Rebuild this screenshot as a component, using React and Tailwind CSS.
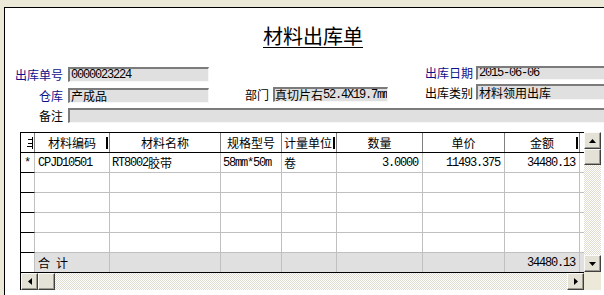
import React from 'react';

// latin runs in the old forms are 6px-wide bitmap digits, keep them narrow
function M({ children }) {
  return <span className="font-['Liberation_Mono',monospace] text-[12px] tracking-[-1.2px]">{children}</span>;
}

function Label({ className = '', children }) {
  return <div className={`text-[12px] leading-[15px] whitespace-nowrap ${className}`}>{children}</div>;
}

function Field({ className = '', children }) {
  return (
    <div className={`flex items-center overflow-hidden whitespace-nowrap bg-[#e0e0e0] border-t-2 border-l-2 border-b border-r border-t-[#7b7b7b] border-l-[#7b7b7b] border-b-[#f7f7f7] border-r-[#f7f7f7] text-[12px] leading-none text-black ${className}`}>
      {children}
    </div>
  );
}

function Arrow({ dir }) {
  if (dir === 'up') return <svg width="7" height="4" viewBox="0 0 7 4"><path d="M3.5 0L7 4H0z" fill="#000" /></svg>;
  if (dir === 'down') return <svg width="7" height="4" viewBox="0 0 7 4"><path d="M0 0h7L3.5 4z" fill="#000" /></svg>;
  if (dir === 'left') return <svg width="4" height="7" viewBox="0 0 4 7"><path d="M4 0v7L0 3.5z" fill="#000" /></svg>;
  return <svg width="4" height="7" viewBox="0 0 4 7"><path d="M0 0l4 3.5L0 7z" fill="#000" /></svg>;
}

function SBtn({ dir, className = '' }) {
  return (
    <div className={`flex shrink-0 items-center justify-center bg-[#e4e1d6] border border-t-[#fbfaf6] border-l-[#fbfaf6] border-b-[#404040] border-r-[#404040] shadow-[inset_-1px_-1px_0_#9d9a90] ${className}`}>
      {dir && <Arrow dir={dir} />}
    </div>
  );
}

const track = "bg-[repeating-conic-gradient(#ffffff_0_25%,#dedbcf_0_50%)] bg-[length:2px_2px]";

const COLS = [
  { w: 'w-[75px]', head: '材料编码', mark: true },
  { w: 'w-[111px]', head: '材料名称' },
  { w: 'w-[61px]', head: '规格型号' },
  { w: 'w-[55px]', head: '计量单位', left: true, mark: true },
  { w: 'w-[86px]', head: '数量' },
  { w: 'w-[82px]', head: '单价' },
  { w: 'w-[75px]', head: '金额', mark: true },
];

const ROW1 = [
  { t: <M>CPJD10501</M>, cls: 'pl-[3px]' },
  { t: <><M>RT8002</M>胶带</>, cls: 'pl-[2px]' },
  { t: <M>58mm*50m</M>, cls: 'pl-[2px]' },
  { t: '卷', cls: 'pl-[2px]' },
  { t: <M>3.0000</M>, cls: 'justify-end pr-[4px]' },
  { t: <M>11493.375</M>, cls: 'justify-end pr-[4px]' },
  { t: <M>34480.13</M>, cls: 'justify-end pr-[4px]' },
];

function Grid() {
  return (
    <div className="flex ml-[15px] mt-[9px]">
      <div className="w-[564px] border-l border-t border-black">
        {/* header */}
        <div className="flex h-[20px] border-b border-black text-[12px]">
          <div className="relative w-[14px] h-full border-r border-r-[#808080]">
            {/* clipped first column caption */}
            <span className="absolute left-[11px] top-[4px] w-[1px] h-[12px] bg-black" />
            <span className="absolute left-[7px] top-[6px] w-[4px] h-[1px] bg-black" />
            <span className="absolute left-[7px] top-[10px] w-[4px] h-[1px] bg-black" />
            <span className="absolute left-[6px] top-[13px] w-[5px] h-[1px] bg-black" />
          </div>
          {COLS.map((c) => (
            <div key={c.head} className={`relative flex items-center h-full border-r border-r-[#808080] overflow-hidden ${c.w} ${c.left ? 'pl-[2px]' : 'justify-center'}`}>
              {c.head}
              {c.mark && <span className="absolute right-[1px] top-[4px] w-[2px] h-[12px] bg-black" />}
            </div>
          ))}
          <div className="w-[4px] h-full" />
        </div>

        {/* body rows */}
        {[0, 1, 2, 3, 4].map((r) => (
          <div key={r} className="flex h-[20px] text-[12px]">
            <div className="w-[14px] h-full border-r border-b border-r-[#c0c0c0] border-b-black flex items-center pl-[3px]">
              {r === 0 && <M>*</M>}
            </div>
            {COLS.map((c, i) => (
              <div key={c.head} className={`flex items-center h-full border-r border-b border-[#c0c0c0] overflow-hidden whitespace-nowrap ${c.w} ${r === 0 ? ROW1[i].cls : ''}`}>
                {r === 0 && ROW1[i].t}
              </div>
            ))}
            <div className="w-[4px] h-full border-b border-[#c0c0c0]" />
          </div>
        ))}

        {/* total */}
        <div className="flex h-[20px] text-[12px] border-b border-black">
          <div className="w-[14px] h-full border-r border-[#c0c0c0]" />
          {COLS.map((c, i) => (
            <div key={c.head} className={`flex items-center h-full bg-[#e0e0e0] border-r border-[#c0c0c0] ${c.w} ${i === 0 ? 'pl-[3px] gap-[6px]' : 'justify-end pr-[4px]'}`}>
              {i === 0 && <><span>合</span><span>计</span></>}
              {i === 6 && <M>34480.13</M>}
            </div>
          ))}
          <div className="w-[4px] h-full bg-[#e0e0e0]" />
        </div>

        {/* horizontal scroll */}
        <div className="flex h-[17px]">
          <SBtn dir="left" className="w-[17px] h-[17px]" />
          <SBtn className="w-[17px] h-[17px]" />
          <div className={`flex-1 ${track}`} />
          <SBtn dir="right" className="w-[17px] h-[17px]" />
        </div>
      </div>

      {/* vertical scroll */}
      <div className="flex flex-col w-[17px]">
        <div className="flex flex-col h-[140px]">
          <SBtn dir="up" className="w-[17px] h-[17px]" />
          <SBtn className="w-[17px] h-[16px]" />
          <div className={`flex-1 ${track}`} />
          <SBtn dir="down" className="w-[17px] h-[17px]" />
        </div>
        <div className="h-[18px] bg-[#ece9d8]" />
      </div>
    </div>
  );
}

export default function App() {
  return (
    <div className="w-[604px] h-[295px] overflow-hidden bg-[#ece9d8] font-['Noto_Sans_CJK_SC',sans-serif] text-black">
      <div className="ml-[4px] mt-[7px] w-[640px] h-[300px] bg-white border-l border-t border-black">
        <div className="ml-[258px] mt-[16px] h-[24px] text-[20px] leading-[24px] underline underline-offset-[3px] decoration-1 whitespace-nowrap">
          材料出库单
        </div>

        {/* row 1 */}
        <div className="flex items-start mt-[17px]">
          <div className="flex items-center mt-[2px]">
            <Label className="w-[58px] text-right text-[#10108a]">出库单号</Label>
            <Field className="ml-[5px] w-[141px] h-[15px] pl-[1px]"><M>0000023224</M></Field>
          </div>
          <div className="flex items-center ml-[216px]">
            <Label className="w-[48px] text-[#10108a]">出库日期</Label>
            <Field className="ml-[3px] w-[140px] h-[14px] pl-[1px]"><M>2015-06-06</M></Field>
          </div>
        </div>

        {/* row 2 */}
        <div className="flex items-start mt-[2px]">
          <div className="flex items-center mt-[4px]">
            <Label className="w-[58px] text-right text-[#10108a]">仓库</Label>
            <Field className="ml-[5px] w-[141px] h-[15px] pl-[1px]">产成品</Field>
          </div>
          <div className="flex items-center mt-[3px] ml-[36px]">
            <Label className="w-[25px]">部门</Label>
            <Field className="ml-[3px] w-[115px] h-[15px]">真切片右<M>52.4X19.7mm</M></Field>
          </div>
          <div className="flex items-center ml-[37px]">
            <Label className="w-[48px]">出库类别</Label>
            <Field className="ml-[3px] w-[140px] h-[16px] pl-[1px]">材料领用出库</Field>
          </div>
        </div>

        {/* row 3 */}
        <div className="flex items-center mt-[5px]">
          <Label className="w-[58px] text-right">备注</Label>
          <Field className="ml-[5px] w-[560px] h-[15px]" />
        </div>

        <Grid />
      </div>
    </div>
  );
}
